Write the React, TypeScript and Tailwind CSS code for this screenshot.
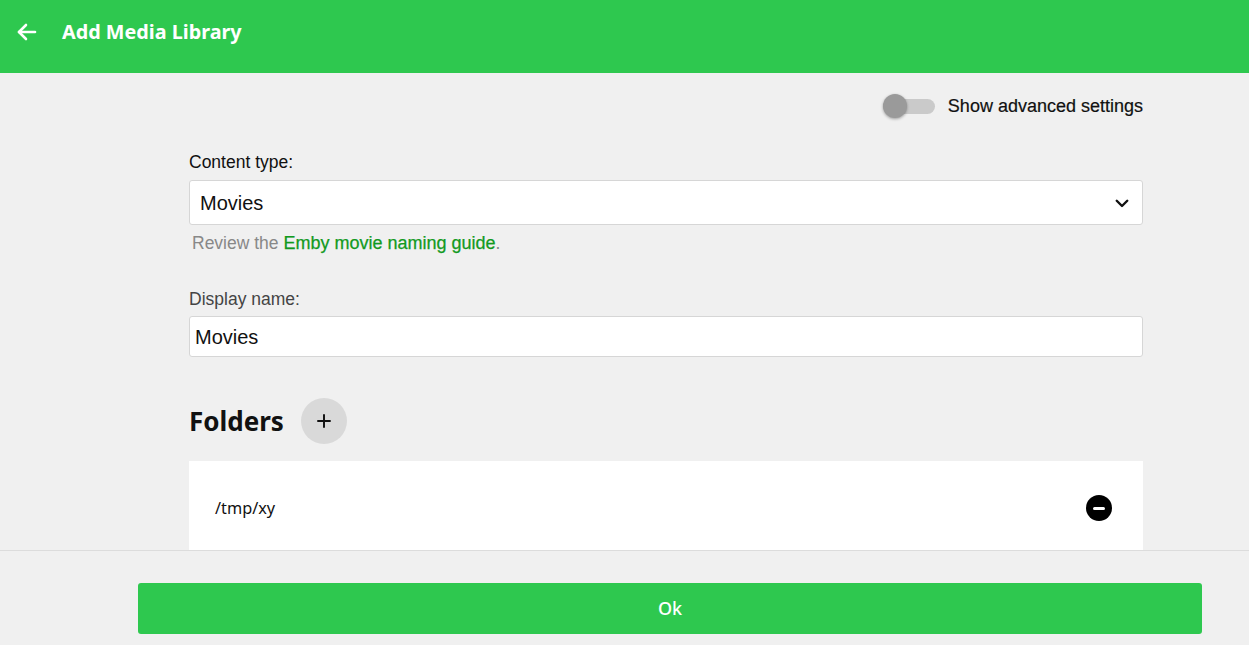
import React from "react";

export default function App() {
  return (
    <div className="flex h-[645px] w-full flex-col overflow-hidden bg-[#f0f0f0]" style={{ fontFamily: '"Liberation Sans", Arial, sans-serif' }}>
      {/* Header */}
      <header className="flex h-[73px] shrink-0 items-start bg-[#2ec84f] pt-[19px] text-white">
        <button className="ml-[14px] flex h-[26px] w-[26px] items-center justify-center">
          <svg width="24" height="24" viewBox="0 0 24 24" fill="none" stroke="white" strokeWidth="2.6" strokeLinecap="round" strokeLinejoin="round">
            <path d="M20 12H4" />
            <path d="M11 5l-7 7 7 7" />
          </svg>
        </button>
        <h1 className="ml-[22px] text-[19.8px] font-bold leading-[26px]" style={{ fontFamily: '"Noto Sans", "Open Sans", sans-serif' }}>
          Add Media Library
        </h1>
      </header>

      {/* Main */}
      <main className="min-h-0 flex-1 overflow-hidden">
        <div className="ml-[189px] w-[954px]">
          <div className="mt-[21px] flex items-center justify-end">
            <div className="relative h-[24px] w-[52px]">
              <div className="absolute left-0 right-0 top-[5px] h-[15px] rounded-full bg-[#cacaca]" />
              <div className="absolute left-0 top-0 h-[24px] w-[24px] rounded-full bg-[#9a9a9a] shadow-[0_1px_3px_rgba(0,0,0,0.35)]" />
            </div>
            <span className="ml-[13px] text-[18px] leading-[24px] text-[#111] [-webkit-text-stroke:0.2px_#111]">Show advanced settings</span>
          </div>

          <div className="mt-[34px] text-[17.5px] leading-[20px] text-[#111]">Content type:</div>
          <div className="mt-[8px] flex h-[45px] items-center justify-between rounded-[3px] border border-[#d6d6d6] bg-white pl-[10px] pr-[11px]">
            <span className="text-[20px] text-[#111]">Movies</span>
            <svg width="18" height="18" viewBox="0 0 24 24" fill="none" stroke="#111" strokeWidth="3.2" strokeLinecap="round" strokeLinejoin="round">
              <path d="M5 9l7 7 7-7" />
            </svg>
          </div>
          <div className="mt-[8px] pl-[3px] text-[17.5px] leading-[20px] text-[#888]">
            Review the <span className="text-[18px] text-[#129a1e] [-webkit-text-stroke:0.25px_#129a1e]">Emby movie naming guide</span>.
          </div>

          <div className="mt-[36px] text-[17.5px] leading-[20px] text-[#444]">Display name:</div>
          <div className="mt-[7px] flex h-[41px] items-center rounded-[3px] border border-[#d6d6d6] bg-white pl-[5px]">
            <span className="text-[20px] text-[#111]">Movies</span>
          </div>

          <div className="mt-[41px] flex items-center">
            <h2 className="text-[26px] font-bold leading-[46px] text-[#111]" style={{ fontFamily: '"Noto Sans", "Open Sans", sans-serif' }}>
              Folders
            </h2>
            <button className="ml-[17px] flex h-[46px] w-[46px] items-center justify-center rounded-full bg-[#d9d9d9]">
              <svg width="18" height="18" viewBox="0 0 24 24" fill="none" stroke="#111" strokeWidth="2.6" strokeLinecap="round">
                <path d="M12 4v16M4 12h16" />
              </svg>
            </button>
          </div>

          <div className="mt-[17px] flex h-[94px] items-center justify-between bg-white pl-[26px] pr-[31px]">
            <span className="text-[16.3px] text-[#111]" style={{ fontFamily: '"Noto Sans", "Open Sans", sans-serif' }}>/tmp/xy</span>
            <div className="flex h-[26px] w-[26px] items-center justify-center rounded-full bg-black">
              <div className="h-[3px] w-[12px] rounded-full bg-white" />
            </div>
          </div>
        </div>
      </main>

      {/* Footer */}
      <footer className="h-[95px] shrink-0 border-t border-[#dcdcdc] bg-[#f0f0f0] pt-[32px]">
        <button className="ml-[138px] flex h-[51px] w-[1064px] items-center justify-center rounded-[3px] bg-[#2ec84f] text-[18px] font-medium text-white" style={{ fontFamily: '"Noto Sans", "Open Sans", sans-serif' }}>
          Ok
        </button>
      </footer>
    </div>
  );
}
